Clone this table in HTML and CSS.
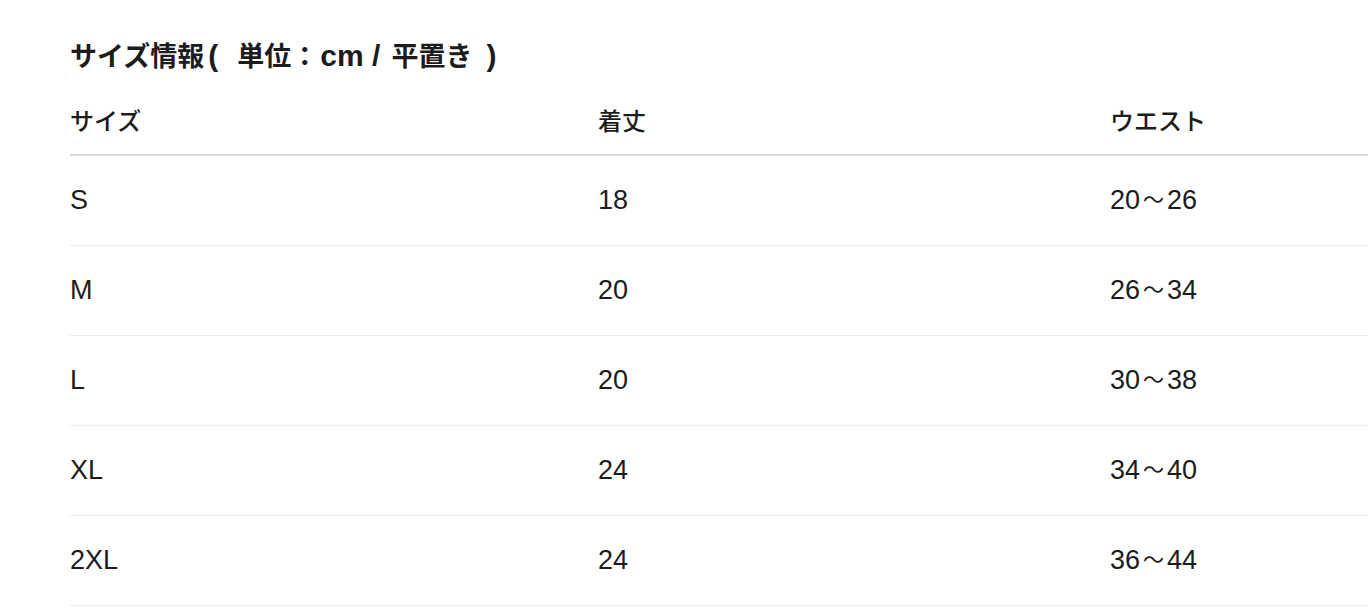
FILE: index.html
```html
<!DOCTYPE html>
<html lang="ja">
<head>
<meta charset="utf-8">
<title>サイズ情報</title>
<link rel="stylesheet" href="styles.css">
</head>
<body>
<section class="size-info">
  <h2 class="size-title">サイズ情報<span class="lat paren-open">(</span>単位：<span class="lat unit">cm / </span>平置き<span class="lat paren-close">)</span></h2>
  <table class="size-table">
    <colgroup>
      <col class="col-size">
      <col class="col-length">
      <col class="col-waist">
    </colgroup>
    <thead>
      <tr><th>サイズ</th><th>着丈</th><th>ウエスト</th></tr>
    </thead>
    <tbody>
      <tr><td>S</td><td>18</td><td>20<span class="tilde">～</span>26</td></tr>
      <tr><td>M</td><td>20</td><td>26<span class="tilde">～</span>34</td></tr>
      <tr><td>L</td><td>20</td><td>30<span class="tilde">～</span>38</td></tr>
      <tr><td>XL</td><td>24</td><td>34<span class="tilde">～</span>40</td></tr>
      <tr><td>2XL</td><td>24</td><td>36<span class="tilde">～</span>44</td></tr>
    </tbody>
  </table>
</section>
</body>
</html>
```
FILE: styles.css
```css
html, body {
  margin: 0;
  padding: 0;
  background: #ffffff;
}
body {
  font-family: "Liberation Sans", "Noto Sans CJK JP", sans-serif;
  color: #1c1c1c;
  overflow: hidden;
}
.size-info {
  padding: 37px 0 0 70px;
}
.size-title {
  margin: 0;
  height: 40px;
  font-size: 27px;
  line-height: 40px;
  font-weight: 700;
  white-space: nowrap;
}
.lat {
  font-size: 30px;
  line-height: 1;
}
.paren-open {
  margin: 0 19px 0 4px;
}
.unit {
  margin-left: 2px;
  margin-right: 3px;
}
.paren-close {
  margin-left: 14px;
}
.size-table {
  margin-top: 28px;
  width: 1298px;
  table-layout: fixed;
  border-collapse: collapse;
}
.col-size { width: 528px; }
.col-length { width: 512px; }
.col-waist { width: 258px; }
.size-table th {
  text-align: left;
  font-size: 24px;
  font-weight: 500;
  padding: 0 0 15px 0;
  height: 34px;
  line-height: 34px;
  border-bottom: 2px solid #d9d9d9;
}
.size-table td {
  padding: 0 0 2px 0;
  height: 87px;
  font-size: 27px;
  line-height: 34px;
  vertical-align: middle;
  border-bottom: 1px solid #ececec;
}
.tilde {
  font-size: 21px;
  line-height: 1;
  margin: 0 3px;
  position: relative;
  top: -2px;
}
```
